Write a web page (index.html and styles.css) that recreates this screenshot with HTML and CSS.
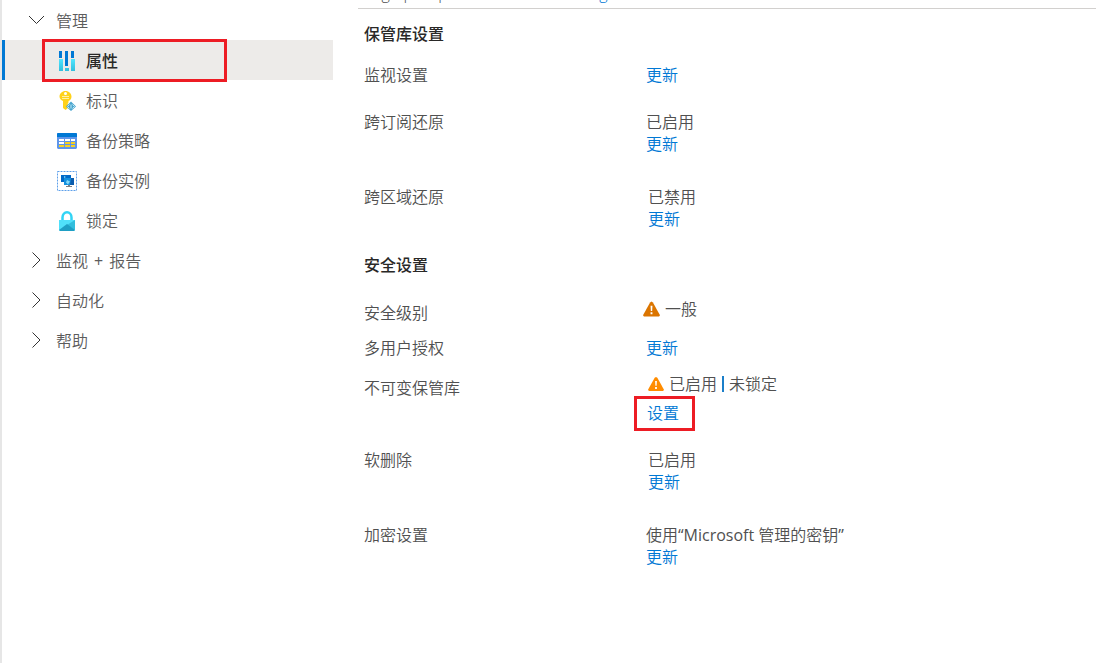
FILE: index.html
```html
<!DOCTYPE html>
<html lang="zh-CN">
<head>
    <meta charset="UTF-8">
    <meta name="viewport" content="width=device-width, initial-scale=1.0">
    <title>属性</title>
    <link rel="stylesheet" href="styles.css">
</head>
<body>
    <nav class="sidebar">
        <button class="group" type="button">
            <svg class="chevron" viewBox="0 0 16 16"><path d="M1 4l7.500 7.500L16 4"/></svg>
            管理
        </button>
        <a class="item active" href="#">
            <svg class="icon" viewBox="0 0 20 20">
                <defs>
                    <linearGradient id="bar" x1="0" y1="1" x2="0" y2="0"><stop offset="0" stop-color="#32bedd"/><stop offset="1" stop-color="#50e6ff"/></linearGradient>
                </defs>
                <path fill="#0078d4" d="M2 0h3v7H2zM8 0h3v15H8zM14 0h3v7h-3z"/>
                <path fill="url(#bar)" d="M2 8h4v12H2zM8 17h4v3H8zM14 8h4v12h-4z"/>
            </svg>
            属性
        </a>
        <a class="item" href="#">
            <svg class="icon" viewBox="0 0 20 20">
                <path fill="#ffd21a" d="M8.500 0C12 0 14.500 2.500 14.500 5.500c0 2-1 3.500-3 4.500v1.500L10.500 13l1 1.500-1 1.500v1.500l-2 1.500L6 17V10C4 9 2.500 7.500 2.500 5.500 2.500 2.500 5 0 8.500 0z"/>
                <circle cx="8.500" cy="2.500" r="1.500" fill="#fff"/>
                <path stroke="#fff0a8" d="M5 5.500h7M5 7.500h7"/>
                <path fill="#4aa5cf" d="M14 10.500l5 5-5 4.500-5-4.500z"/>
                <path fill="none" stroke="#c4eaf5" d="M12.500 13.500l-2 2 2 2M15.500 13.500l2 2-2 2M14 13.500v4"/>
            </svg>
            标识
        </a>
        <a class="item" href="#">
            <svg class="icon" viewBox="0 0 20 20">
                <path fill="#5e96ea" d="M0 2h20v15l-1 1H1l-1-1z"/>
                <path fill="#0078d4" d="M1 2h18l1 1v3H0V3z"/>
                <path fill="#fff" d="M2 8h5v2H2zM8 8h5v2H8zM14 8h4v2h-4zM2 11h5v2H2z"/>
                <path fill="#f5d021" d="M8 11h5v2H8zM14 11h4v2h-4zM2 14h5v2H2zM8 14h5v2H8zM14 14h4v2h-4z"/>
            </svg>
            备份策略
        </a>
        <a class="item" href="#">
            <svg class="icon" viewBox="0 0 20 20">
                <path fill="none" stroke="#5ea0ea" stroke-dasharray="2 1" d="M.5.5h19v19H.5z"/>
                <path fill="#0069c8" d="M4 4h10v7H4z"/>
                <path fill="#1490df" d="M7 7h10v7H7z"/>
                <path fill="#0b5cad" d="M14 7h3v7h-4z"/>
                <path fill="#83d8f7" d="M10 9l3 1.500-2 3-2-2zM7 5l2 1-2 1z"/>
                <path fill="#7a7f85" d="M11 14h2v1h2v1H9v-1h2z"/>
            </svg>
            备份实例
        </a>
        <a class="item" href="#">
            <svg class="icon" viewBox="0 0 20 20">
                <path fill="none" stroke="#32d4f5" stroke-width="2.500" d="M5.500 10V6.500C5.500 3.500 7.500 1.300 10 1.300s4.500 2.200 4.500 5.200V10"/>
                <path fill="#50e0fa" d="M2 9h16v10l-1 1H3l-1-1z"/>
                <path fill="#32bedd" d="M18 9v10l-8-5z"/>
                <path fill="#1f9fc4" d="M2 19l8-6 8 6-1 1H3z"/>
            </svg>
            锁定
        </a>
        <button class="group" type="button">
            <svg class="chevron" viewBox="0 0 16 16"><path d="M4.500.500L12 8l-7.500 7.500"/></svg>
            <span class="joined"><span>监视</span><span class="latin">+</span><span>报告</span></span>
        </button>
        <button class="group" type="button">
            <svg class="chevron" viewBox="0 0 16 16"><path d="M4.500.500L12 8l-7.500 7.500"/></svg>
            自动化
        </button>
        <button class="group" type="button">
            <svg class="chevron" viewBox="0 0 16 16"><path d="M4.500.500L12 8l-7.500 7.500"/></svg>
            帮助
        </button>
    </nav>
    <main class="content">
        <div class="scrolled">
            <span class="scrolled-label">Log upkeep</span>
            <a href="#">Manage</a>
        </div>
        <section class="settings">
            <h2>保管库设置</h2>
            <dl>
                <div class="row"><dt>监视设置</dt><dd><a href="#">更新</a></dd></div>
                <div class="row"><dt>跨订阅还原</dt><dd>已启用<br><a href="#">更新</a></dd></div>
                <div class="row spaced"><dt>跨区域还原</dt><dd class="indent">已禁用<br><a href="#">更新</a></dd></div>
            </dl>
            <h2>安全设置</h2>
            <dl class="security">
                <div class="row warning">
                    <dt>安全级别</dt>
                    <dd class="status level">
                        <svg class="alert" viewBox="0 0 18 16"><path fill="#db7500" d="M9 0l1.500 1L18 14.500 17 16H1l-1-1.500L7.500 1z"/><path fill="#fff" d="M8 4.500h2L9.700 10H8.300zM8 11.500h2v2H8z"/></svg>
                        一般
                    </dd>
                </div>
                <div class="row"><dt>多用户授权</dt><dd><a href="#">更新</a></dd></div>
                <div class="row warning">
                    <dt>不可变保管库</dt>
                    <dd>
                        <div class="status indent">
                            <svg class="alert small" viewBox="0 0 18 16"><path fill="#ff8c00" d="M9 0l1.500 1L18 14.500 17 16H1l-1-1.500L7.500 1z"/><path fill="#fff" d="M8 4.500h2L9.700 10H8.300zM8 11.500h2v2H8z"/></svg>
                            <span>已启用</span><span class="divider"></span><span>未锁定</span>
                        </div>
                        <a class="highlight" href="#">设置</a>
                    </dd>
                </div>
                <div class="row"><dt>软删除</dt><dd class="indent">已启用<br><a href="#">更新</a></dd></div>
                <div class="row spaced"><dt>加密设置</dt><dd>使用<span class="latin">“Microsoft </span>管理的密钥<span class="latin">”</span><br><a href="#">更新</a></dd></div>
            </dl>
        </section>
    </main>
</body>
</html>
```

FILE: styles.css
```css
* {
    box-sizing: border-box;
}

body {
    display: flex;
    min-height: 100vh;
    margin: 0;
    font: 350 16px/22px "Open Sans", "Noto Sans CJK SC", sans-serif;
    color: #505050;
    background: #fff;
}

a {
    color: #0078d4;
    text-decoration: none;
}

.latin {
    font-weight: 400;
}

.sidebar {
    flex: 0 0 333px;
    border-left: 2px solid #e6e6e6;
}

.group,
.item {
    display: flex;
    align-items: center;
    gap: 12px;
    width: 100%;
    height: 40px;
    padding: 2px 26px 0;
    font: inherit;
    color: #5c5c5c;
    background: none;
    border: 0;
}

.item {
    gap: 9px;
    padding-left: 55px;
}

.joined {
    display: flex;
    gap: 6px;
}

.active {
    position: relative;
    font-weight: 500;
    color: #292827;
    background: #edebe9;
    box-shadow: inset 3px 0 #0078d4;
}

.active::after {
    content: "";
    position: absolute;
    top: -1px;
    left: 40px;
    width: 179px;
    height: 37px;
    border: 3px solid #ed1c24;
}

.icon {
    width: 20px;
    height: 20px;
}

.chevron {
    width: 16px;
    height: 16px;
    margin-bottom: 3px;
    fill: none;
    stroke: #333;
}

.content {
    flex: 1;
    padding-left: 25px;
}

/* last row of the section above, mostly scrolled away */
.scrolled {
    display: flex;
    align-items: flex-end;
    height: 9px;
    padding: 0 6px 4px;
    overflow: hidden;
    border-bottom: 1px solid #d2d0ce;
}

.scrolled-label {
    width: 195px;
}

.settings {
    padding: 14px 6px;
}

h2 {
    margin: 0;
    font-size: 16px;
    font-weight: 500;
    color: #292827;
}

dl {
    margin: 19px 0 24px;
}

.security {
    margin-top: 22px;
}

.row {
    display: flex;
}

.row + .row {
    margin-top: 25px;
}

.row + .spaced {
    margin-top: 31px;
}

.warning + .row {
    margin-top: 13px;
}

.row + .warning {
    margin-top: 14px;
}

.warning dt {
    padding-top: 4px;
}

dt {
    width: 282px;
}

dd {
    margin: 0;
}

.indent {
    padding-left: 2px;
}

.status {
    display: flex;
    align-items: center;
    gap: 5px;
    height: 22px;
}

.level {
    margin-left: -3px;
}

.alert {
    width: 17px;
    height: 16px;
}

.small {
    width: 16px;
}

.divider {
    width: 2px;
    height: 16px;
    background: #1b7fc9;
}

.highlight {
    display: block;
    width: max-content;
    margin: 1px 0 5px -12px;
    padding: 3px 13px 4px 10px;
    border: 3px solid #ed1c24;
}
```
